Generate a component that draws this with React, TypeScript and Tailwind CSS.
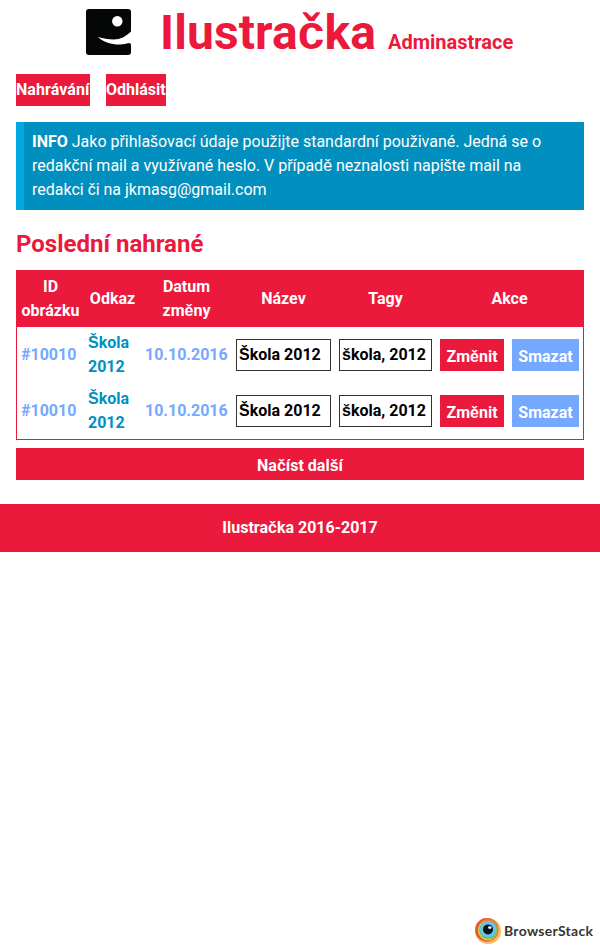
import React from "react";

const rows = [
  { id: "#10010", link: "Škola 2012", date: "10.10.2016", name: "Škola 2012", tags: "škola, 2012" },
  { id: "#10010", link: "Škola 2012", date: "10.10.2016", name: "Škola 2012", tags: "škola, 2012" },
];

// Carons are set in the secondary face, everything else in Roboto.
function T({ children }: { children: string }) {
  return (
    <>
      {children.split(/([čšěřžŠČŽŘĚ])/).map((part, i) =>
        i % 2 ? (
          <span key={i} className="font-['Liberation_Sans',sans-serif] leading-none">{part}</span>
        ) : (
          part
        ),
      )}
    </>
  );
}

function Logo() {
  return (
    <svg className="h-[46px] w-[45px] shrink-0" viewBox="0 0 45 46">
      <path
        fill="#050707"
        d="M3 0H42Q45 0 45 3V22.5C40 27.5 34 30.5 28 30.5C22 30.5 17 29.5 12 28C18 33.5 25 35.5 33 35.5C38 35.5 40 34.5 43 34Q45 34 45 36V43Q45 46 42 46H3Q0 46 0 43V3Q0 0 3 0Z"
      />
      <circle cx="31.3" cy="12.3" r="5.2" fill="#fff" />
    </svg>
  );
}

function BrowserStack() {
  return (
    <div className="flex items-center gap-[3px]">
      <svg className="size-[26px]" viewBox="0 0 26 26">
        <circle cx="13" cy="13" r="13" fill="#f9b960" />
        <circle cx="11.8" cy="11.8" r="11.7" fill="#e4572f" />
        <circle cx="13" cy="11.2" r="10.2" fill="#ef7d3c" />
        <circle cx="12.6" cy="12.6" r="9.6" fill="#c3d94a" />
        <circle cx="13.2" cy="12" r="8.8" fill="#5fb95a" />
        <circle cx="13.2" cy="11.4" r="8.2" fill="#62c8ea" />
        <circle cx="13" cy="11.4" r="5" fill="#10151a" />
        <ellipse cx="14.8" cy="9.6" rx="1.7" ry="1.3" fill="#fff" />
      </svg>
      <svg className="h-[20px] w-[92px]" viewBox="0 0 92 20">
        <text x="0" y="14.8" textLength="89" className="fill-[#39352f] font-['Lato',sans-serif] text-[14px] font-bold">BrowserStack</text>
      </svg>
    </div>
  );
}

const field = "block h-8 w-full rounded-none border border-[#333] bg-white px-0.5 pb-px leading-[30px] text-black outline-none";
const cell = "h-14 px-1 py-0";

export default function App() {
  return (
    <div className="flex min-h-[950px] w-[600px] flex-col bg-white font-['Roboto','Liberation_Sans',sans-serif] text-base leading-6">
      <header className="flex h-[74px] pl-[86px] text-[#eb193c]">
        <div className="pt-[9px]"><Logo /></div>
        <h1 className="ml-[29px] whitespace-nowrap pt-px text-[48px] font-bold leading-[64px]">
          <span className="tracking-[0.1px]"><T>Ilustračka</T></span> <small className="text-[20px]">Adminastrace</small>
        </h1>
      </header>
      <nav className="flex gap-4 px-4 font-bold leading-8 text-white">
        <a className="h-8 w-[74px] whitespace-nowrap bg-[#eb193c] tracking-[0.08px]">Nahrávání</a>
        <a className="h-8 w-[60px] whitespace-nowrap bg-[#eb193c]">Odhlásit</a>
      </nav>
      <p className="mx-4 mt-4 border-l-8 border-[#00a9e0] bg-[#008fbe] p-2 text-white">
        <strong>INFO</strong>{" "}
        <T>Jako přihlašovací údaje použijte standardní použivané. Jedná se o redakční mail a využívané heslo. V případě neznalosti napište mail na redakci či na jkmasg@gmail.com</T>
      </p>
      <h2 className="mx-4 mt-4 text-2xl font-bold leading-9 text-[#eb193c]">Poslední nahrané</h2>
      <div className="mx-4 mt-2 border border-[#eb193c]">
        <table className="w-full table-fixed border-collapse font-bold">
          <colgroup>
            <col className="w-[67px]" />
            <col className="w-[57px]" />
            <col className="w-[91px]" />
            <col className="w-[103px]" />
            <col className="w-[101px]" />
            <col className="w-[72px]" />
            <col className="w-[75px]" />
          </colgroup>
          <thead className="bg-[#eb193c] text-white">
            <tr>
              <th className={cell}>ID obrázku</th>
              <th className={cell}>Odkaz</th>
              <th className={cell}>Datum <T>změny</T></th>
              <th className={cell}>Název</th>
              <th className={cell}>Tagy</th>
              <th className={cell} colSpan={2}>Akce</th>
            </tr>
          </thead>
          <tbody>
            {rows.map((r, i) => (
              <tr key={i}>
                <td className="h-14 px-1 text-[#74a9ff]">{r.id}</td>
                <td className="h-14 px-1 text-[#008fbe]"><T>{r.link}</T></td>
                <td className="h-14 px-1 text-[#74a9ff]">{r.date}</td>
                <td className={cell}><div className={field}><T>{r.name}</T></div></td>
                <td className={cell}><div className={field}><T>{r.tags}</T></div></td>
                <td className={cell}><button className="block h-8 w-full bg-[#eb193c] pt-[3px] text-center text-white"><T>Změnit</T></button></td>
                <td className={cell}><button className="block h-8 w-full bg-[#74a9ff] pt-[3px] text-center text-white">Smazat</button></td>
              </tr>
            ))}
          </tbody>
        </table>
      </div>
      <button className="mx-4 mt-2 h-8 bg-[#eb193c] pt-[3px] text-center font-bold text-white"><T>Načíst další</T></button>
      <footer className="mt-6 h-12 bg-[#eb193c] text-center font-bold leading-[48px] text-white"><T>Ilustračka 2016-2017</T></footer>
      <div className="mt-auto flex justify-end pb-[6px] pr-[4px]">
        <BrowserStack />
      </div>
    </div>
  );
}
